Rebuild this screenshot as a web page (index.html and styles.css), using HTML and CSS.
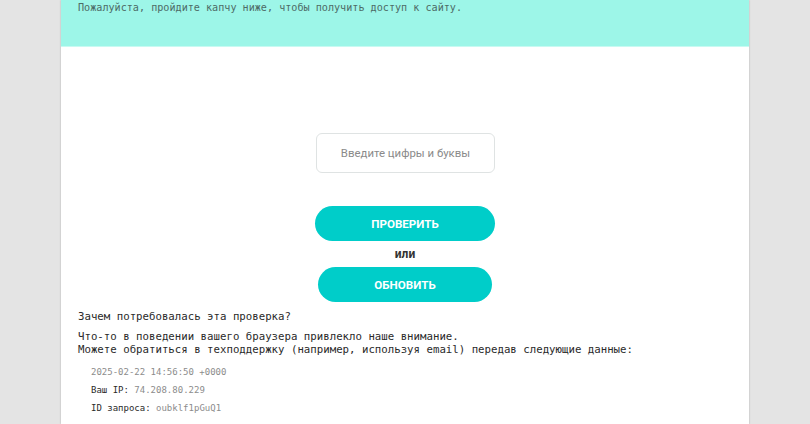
FILE: index.html
```html
<!DOCTYPE html>
<html lang="ru">
<head>
<meta charset="utf-8">
<title>Проверка</title>
<link rel="stylesheet" href="styles.css">
</head>
<body>
<div class="card">
  <div class="header">
    <p class="lead">Пожалуйста, пройдите капчу ниже, чтобы получить доступ к сайту.</p>
  </div>
  <div class="form">
    <input class="captcha" type="text" placeholder="Введите цифры и буквы">
    <button class="btn btn-check">ПРОВЕРИТЬ</button>
    <div class="or">или</div>
    <button class="btn btn-refresh">ОБНОВИТЬ</button>
  </div>
  <div class="info">
    <p class="q">Зачем потребовалась эта проверка?</p>
    <p class="why">Что-то в поведении вашего браузера привлекло наше внимание.<br>Можете обратиться в техподдержку (например, используя email) передав следующие данные:</p>
    <div class="data">
      <div class="row"><span class="val">2025-02-22 14:56:50 +0000</span></div>
      <div class="row"><span class="key">Ваш IP:</span> <span class="val">74.208.80.229</span></div>
      <div class="row"><span class="key">ID запроса:</span> <span class="val">oubklf1pGuQ1</span></div>
    </div>
  </div>
</div>
</body>
</html>
```
FILE: styles.css
```css
html, body {
  margin: 0;
  padding: 0;
  background: #e4e4e4;
  height: 100%;
  overflow: hidden;
}
.card {
  width: 688px;
  margin: 0 auto;
  background: #ffffff;
  min-height: 424px;
  box-shadow: 0 0 2px rgba(0,0,0,0.18), 0 0 1px rgba(0,0,0,0.1);
  font-family: "DejaVu Sans Mono", monospace;
}
.header {
  background: #9df6e8;
  height: 46px;
  border-bottom: 1px solid #c8faf2;
  padding: 0 17px;
}
.lead {
  margin: 0;
  padding-top: 1px;
  font-size: 10.15px;
  line-height: 13px;
  color: #4d6b66;
}
.form {
  display: flex;
  flex-direction: column;
  align-items: center;
  padding-top: 86px;
}
.captcha {
  box-sizing: border-box;
  width: 179px;
  height: 40px;
  border: 1.5px solid #dfe3e3;
  border-radius: 6px;
  text-align: center;
  font-family: Roboto, "Noto Sans", sans-serif;
  font-size: 11.4px;
  color: #444;
  outline: none;
  padding: 0;
  margin-left: 1px;
}
.captcha::placeholder {
  color: #8a8a8a;
}
.btn {
  box-sizing: border-box;
  border: none;
  height: 35px;
  border-radius: 18px;
  background: #00cdc9;
  color: #ffffff;
  font-family: Roboto, "Noto Sans", sans-serif;
  font-weight: 700;
  font-size: 11.6px;
  padding: 0;
  cursor: pointer;
}
.btn-check {
  width: 180px;
  margin-top: 33px;
}
.btn-refresh {
  width: 174px;
}
.or {
  font-family: Roboto, "Noto Sans", sans-serif;
  font-weight: 700;
  font-size: 12px;
  color: #333;
  line-height: 26px;
}
.info {
  padding: 8px 17px 0;
  color: #2a2a2a;
  font-size: 10.72px;
  line-height: 13px;
}
.q {
  margin: 0 0 7px;
}
.why {
  margin: 0 0 7px;
}
.data {
  padding-left: 13px;
  font-size: 9px;
}
.row {
  line-height: 18px;
}
.key {
  color: #2a2a2a;
}
.val {
  color: #8c8c8c;
}
```
